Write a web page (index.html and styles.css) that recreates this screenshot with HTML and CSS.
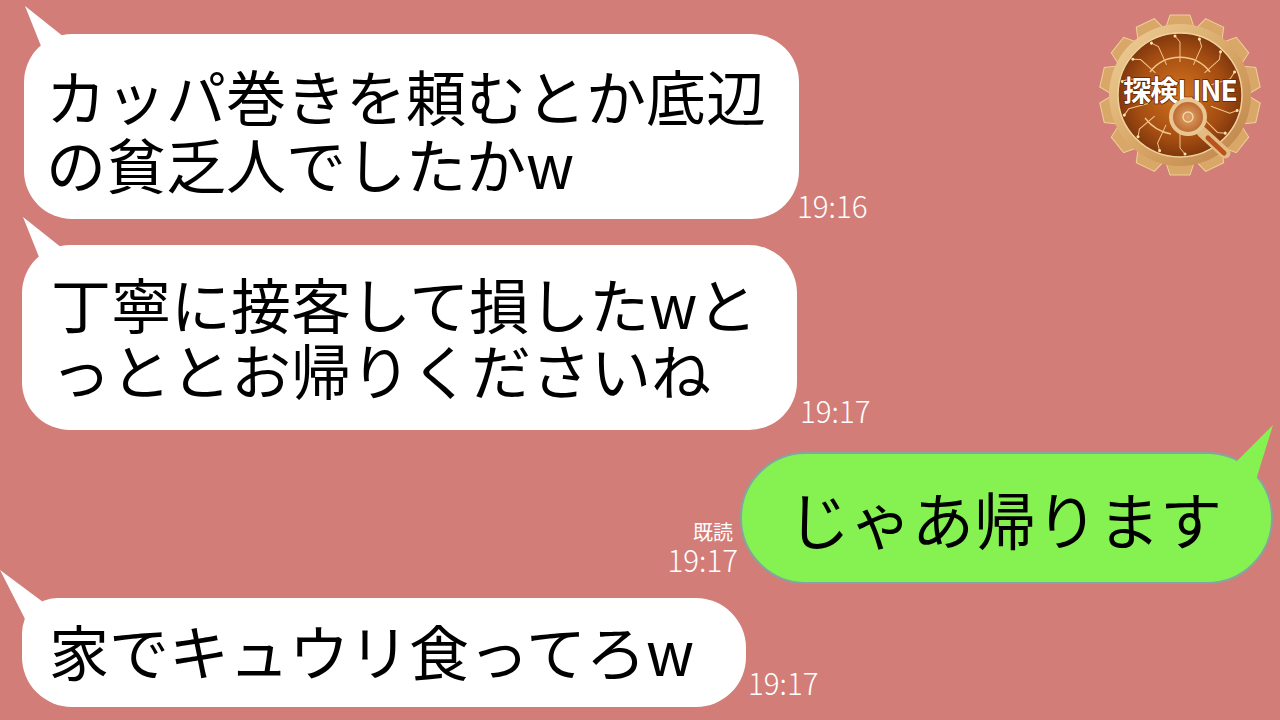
FILE: index.html
```html
<!DOCTYPE html>
<html lang="ja">
<head>
  <meta charset="utf-8">
  <title>探検LINE</title>
  <link rel="stylesheet" href="styles.css">
</head>
<body>
  <div class="chat">
    <div class="row row-first">
      <div class="bubble bubble-left">カッパ巻きを頼むとか底辺<br>の貧乏人でしたかw</div>
      <div class="meta meta-first"><span class="time">19:16</span></div>
    </div>
    <div class="row row-second">
      <div class="bubble bubble-left bubble-wide">丁寧に接客して損したwと<br>っととお帰りくださいね</div>
      <div class="meta meta-second"><span class="time">19:17</span></div>
    </div>
    <div class="row row-mine">
      <div class="meta meta-mine"><span class="read">既読</span><span class="time">19:17</span></div>
      <div class="bubble bubble-right">じゃあ帰ります</div>
    </div>
    <div class="row row-last">
      <div class="bubble bubble-left bubble-short">家でキュウリ食ってろw</div>
      <div class="meta meta-last"><span class="time">19:17</span></div>
    </div>
  </div>

  <svg class="logo" viewBox="0 0 170 170" width="170" height="170">
    <defs>
      <linearGradient id="gold" x1="0" y1="0" x2="1" y2="1">
        <stop offset="0" stop-color="#f0d29c"/>
        <stop offset="0.5" stop-color="#d9a868"/>
        <stop offset="1" stop-color="#bd8148"/>
      </linearGradient>
      <radialGradient id="core" cx="0.5" cy="0.5" r="0.55">
        <stop offset="0" stop-color="#d2741f"/>
        <stop offset="0.65" stop-color="#a44d12"/>
        <stop offset="1" stop-color="#74300b"/>
      </radialGradient>
      <radialGradient id="lens" cx="0.5" cy="0.5" r="0.5">
        <stop offset="0" stop-color="#e0a469"/>
        <stop offset="1" stop-color="#b9652c"/>
      </radialGradient>
      <path id="tooth" d="M75 5 L95 5 L100 20 L70 20 Z" fill="#d9a868" stroke="#efd09a" stroke-width="1"/>
      <g id="ray">
        <path d="M85 52 L85 32 L80 26" stroke="#f3c48a" stroke-width="1" fill="none"/>
        <circle cx="80" cy="26" r="1.5" fill="#ffe3a8"/>
      </g>
    </defs>
    <g>
      <use href="#tooth"/>
      <use href="#tooth" transform="rotate(25.7 85 85)"/>
      <use href="#tooth" transform="rotate(51.4 85 85)"/>
      <use href="#tooth" transform="rotate(77.1 85 85)"/>
      <use href="#tooth" transform="rotate(102.9 85 85)"/>
      <use href="#tooth" transform="rotate(128.6 85 85)"/>
      <use href="#tooth" transform="rotate(154.3 85 85)"/>
      <use href="#tooth" transform="rotate(180 85 85)"/>
      <use href="#tooth" transform="rotate(205.7 85 85)"/>
      <use href="#tooth" transform="rotate(231.4 85 85)"/>
      <use href="#tooth" transform="rotate(257.1 85 85)"/>
      <use href="#tooth" transform="rotate(282.9 85 85)"/>
      <use href="#tooth" transform="rotate(308.6 85 85)"/>
      <use href="#tooth" transform="rotate(334.3 85 85)"/>
    </g>
    <circle cx="85" cy="85" r="71" fill="url(#gold)"/>
    <circle cx="85" cy="85" r="62" fill="url(#core)" stroke="#f0d29c" stroke-width="1.5"/>
    <g>
      <use href="#ray"/>
      <use href="#ray" transform="rotate(24 85 85)"/>
      <use href="#ray" transform="rotate(48 85 85)"/>
      <use href="#ray" transform="rotate(72 85 85)"/>
      <use href="#ray" transform="rotate(-24 85 85)"/>
      <use href="#ray" transform="rotate(-48 85 85)"/>
      <use href="#ray" transform="rotate(-72 85 85)"/>
      <use href="#ray" transform="rotate(110 85 85)"/>
      <use href="#ray" transform="rotate(135 85 85)"/>
      <use href="#ray" transform="rotate(180 85 85)"/>
      <use href="#ray" transform="rotate(205 85 85)"/>
      <use href="#ray" transform="rotate(230 85 85)"/>
      <use href="#ray" transform="rotate(255 85 85)"/>
    </g>
    <path d="M55 62 A38 38 0 0 1 115 62" stroke="#f1c489" stroke-width="1.4" fill="none"/>
    <path d="M50 108 A42 42 0 0 0 76 124" stroke="#f1c489" stroke-width="1.4" fill="none"/>
    <text class="logo-text" x="85" y="91" text-anchor="middle">探検LINE</text>
    <path d="M107 122 L130 143" stroke="#e3bb83" stroke-width="11" stroke-linecap="round"/>
    <path d="M113 128 L129 143" stroke="#b9521c" stroke-width="5" stroke-linecap="round"/>
    <circle cx="93" cy="107" r="17" fill="url(#lens)" stroke="#e8c591" stroke-width="4"/>
    <circle cx="93" cy="107" r="5" fill="none" stroke="#f3d6a6" stroke-width="1.5"/>
  </svg>
</body>
</html>
```

FILE: styles.css
```css
html, body {
  margin: 0;
  padding: 0;
}
body {
  width: 1280px;
  height: 720px;
  overflow: hidden;
  background-color: #d27d78;
  font-family: "Noto Sans CJK JP", "Noto Sans", sans-serif;
  color: #000;
}
.chat {
  display: flex;
  flex-direction: column;
  padding-top: 34px;
}
.row {
  display: flex;
  align-items: flex-end;
}
.row-first {
  margin-left: 24px;
}
.row-second {
  margin-top: 26px;
  margin-left: 22px;
}
.row-mine {
  margin-top: 22px;
  justify-content: flex-end;
  padding-right: 7px;
}
.row-last {
  margin-top: 14px;
  margin-left: 22px;
}
.bubble {
  position: relative;
  box-sizing: border-box;
  font-size: 60px;
  line-height: 68px;
  white-space: nowrap;
}
.bubble-left {
  width: 775px;
  height: 185px;
  padding: 27px 0 0 22px;
  background-color: #fff;
  border-radius: 48px;
}
.bubble-wide {
  padding: 25px 0 0 29px;
  line-height: 66px;
}
.bubble-short {
  width: 724px;
  height: 109px;
  padding: 18px 0 0 27px;
  border-radius: 35px 50px 50px 50px;
}
.bubble-right {
  width: 533px;
  height: 132px;
  padding: 30px 0 0 46px;
  background-color: #86f252;
  border: 2px solid #83a6a0;
  border-radius: 66px;
  font-size: 62px;
}
/* tails */
.bubble-left::before {
  content: "";
  position: absolute;
  left: 0;
  top: -28px;
  width: 40px;
  height: 50px;
  background-color: #fff;
  clip-path: polygon(1px 0, 40px 31px, 19px 45px);
}
.bubble-short::before {
  left: -22px;
  top: -28px;
  width: 62px;
  height: 62px;
  clip-path: polygon(0 0, 43px 32px, 60px 50px, 30px 62px, 24px 47px);
}
.bubble-right::before {
  content: "";
  position: absolute;
  right: -4px;
  top: -29px;
  width: 42px;
  height: 62px;
  background-color: #86f252;
  clip-path: polygon(40px 0, 2px 38px, 22px 58px);
}
.meta {
  display: flex;
  flex-direction: column;
  align-items: flex-end;
  color: #fff;
}
.meta-first {
  margin-left: -2px;
  margin-bottom: -1px;
}
.meta-second {
  margin-left: 3px;
  margin-bottom: 5px;
}
.meta-last {
  margin-left: 2px;
  margin-bottom: 10px;
}
.time {
  font-size: 29.5px;
  font-weight: 300;
  line-height: 30px;
}
.meta-mine {
  margin: 0 2px 0 0;
  padding-bottom: 10px;
}
.read {
  margin-right: 5px;
  font-size: 20px;
  line-height: 24px;
}
.logo {
  position: absolute;
  left: 1095px;
  top: 10px;
}
.logo-text {
  font-family: "Noto Sans CJK JP", sans-serif;
  font-size: 28px;
  font-weight: 700;
  letter-spacing: -1px;
  fill: #fff;
  stroke: #5b2508;
  stroke-width: 1.5px;
  paint-order: stroke;
}
```
